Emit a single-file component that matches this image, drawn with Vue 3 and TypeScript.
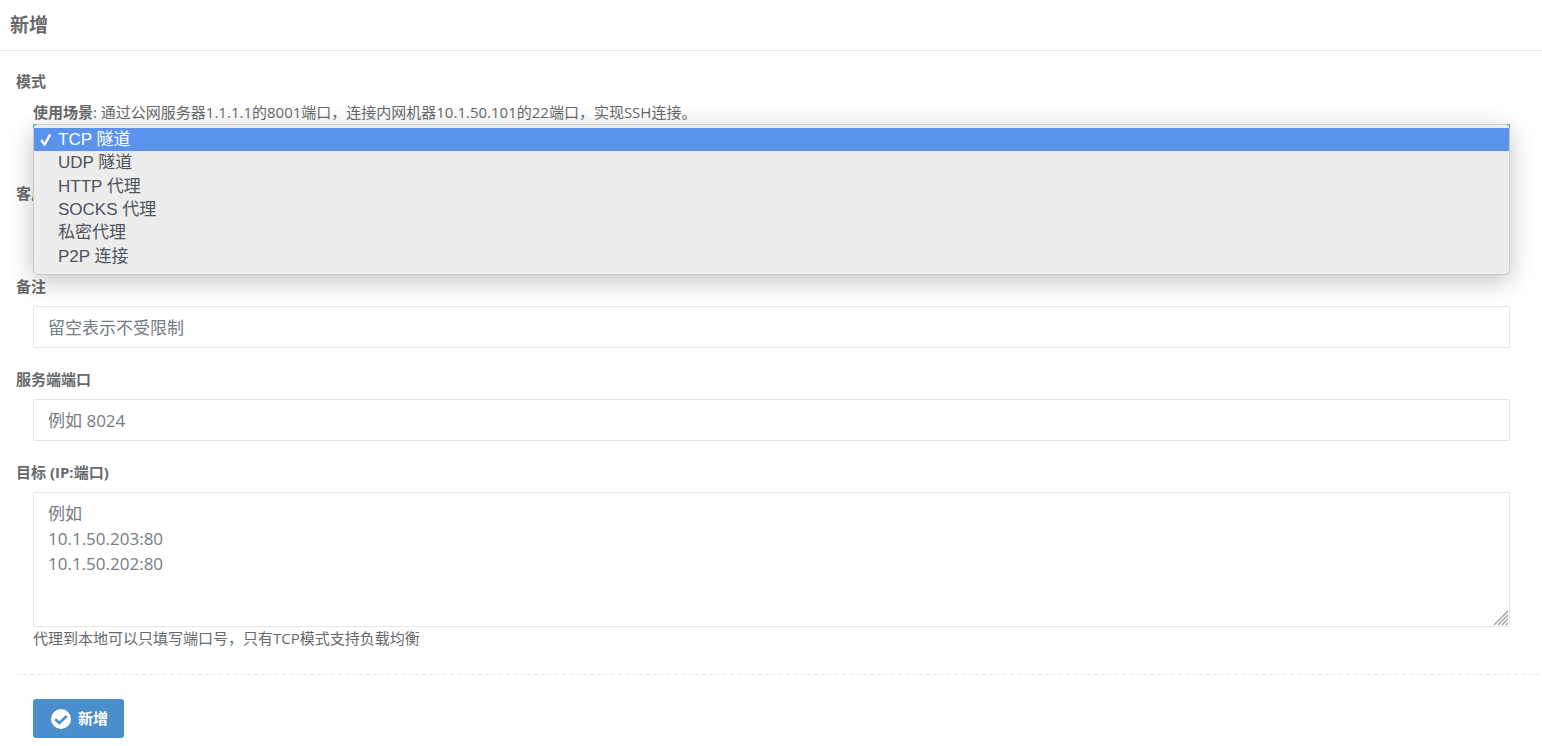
<script setup lang="ts">
import { ref } from 'vue'

interface Mode {
  value: string
  label: string
}

const modes: Mode[] = [
  { value: 'tcp', label: 'TCP 隧道' },
  { value: 'udpServer', label: 'UDP 隧道' },
  { value: 'httpProxy', label: 'HTTP 代理' },
  { value: 'socks5', label: 'SOCKS 代理' },
  { value: 'secret', label: '私密代理' },
  { value: 'p2p', label: 'P2P 连接' },
]

const mode = ref('tcp')
const menuOpen = ref(true)
const client = ref('')
const remark = ref('')
const port = ref('')
const target = ref('')
const targetHint = '例如\n10.1.50.203:80\n10.1.50.202:80'

function choose(value: string) {
  mode.value = value
  menuOpen.value = false
}
</script>

<template>
  <main class="panel">
    <header class="panel-head">
      <h1>新增</h1>
    </header>

    <form class="form" @submit.prevent>
      <div class="group">
        <label class="name" for="mode">模式</label>
        <div class="field mode-field">
          <p class="help"><b>使用场景</b>: 通过公网服务器1.1.1.1的8001端口，连接内网机器10.1.50.101的22端口，实现SSH连接。</p>
          <div class="picker">
            <select id="mode" v-model="mode" class="control active" @mousedown.prevent="menuOpen = !menuOpen">
              <option v-for="m in modes" :key="m.value" :value="m.value">{{ m.label }}</option>
            </select>
            <ul v-if="menuOpen" class="menu" role="listbox" aria-label="模式">
              <li
                v-for="m in modes"
                :key="m.value"
                role="option"
                :aria-selected="m.value === mode"
                :class="{ selected: m.value === mode }"
                @click="choose(m.value)"
              >
                <span class="mark">
                  <svg v-if="m.value === mode" viewBox="0 0 12 14" width="12" height="14" aria-hidden="true">
                    <path d="M1.8 7.8 4.6 11.6 9.8 2.2" fill="none" stroke="currentColor" stroke-width="2.4" stroke-linejoin="round" stroke-linecap="round" />
                  </svg>
                </span>
                <span>{{ m.label }}</span>
              </li>
            </ul>
          </div>
        </div>
      </div>

      <div class="group">
        <label class="name" for="client">客户端</label>
        <div class="field">
          <select id="client" v-model="client" class="control"></select>
        </div>
      </div>

      <div class="group">
        <label class="name" for="remark">备注</label>
        <div class="field">
          <input id="remark" v-model="remark" class="control" type="text" placeholder="留空表示不受限制" />
        </div>
      </div>

      <div class="group">
        <label class="name" for="port">服务端端口</label>
        <div class="field">
          <input id="port" v-model="port" class="control" type="text" placeholder="例如 8024" />
        </div>
      </div>

      <div class="group">
        <label class="name" for="target">目标 (IP:端口)</label>
        <div class="field">
          <div class="area">
            <textarea id="target" v-model="target" class="control" :placeholder="targetHint"></textarea>
            <svg class="grip" viewBox="0 0 16 16" width="16" height="16" aria-hidden="true">
              <path d="M1 15 15 1M5 15 15 5M9 15 15 9M13 15l2-2" fill="none" stroke="#999" stroke-width="1.2" />
            </svg>
          </div>
          <p class="help">代理到本地可以只填写端口号，只有TCP模式支持负载均衡</p>
        </div>
      </div>

      <hr class="divider" />

      <div class="actions">
        <button class="submit" type="submit">
          <svg viewBox="0 0 20 20" width="20" height="20" aria-hidden="true">
            <circle cx="10" cy="10" r="10" fill="#fff" />
            <path d="M4.2 10.2 8.4 14 15.8 7" fill="none" stroke="#4a8ecb" stroke-width="2.5" />
          </svg>
          <span>新增</span>
        </button>
      </div>
    </form>
  </main>
</template>

<style>
body {
  margin: 0;
  background: #fff;
}
</style>

<style scoped>
* {
  box-sizing: border-box;
}

.panel {
  color: #676a6c;
  font-family: "Open Sans", "Noto Sans CJK SC", sans-serif;
  font-size: 15px;
  line-height: 23px;
}

.panel-head {
  padding: 10px;
  border-bottom: 1px solid #e7eaec;
}

h1 {
  margin: 0;
  font-size: 19px;
  font-weight: 600;
  line-height: 30px;
}

.form {
  display: flex;
  flex-direction: column;
  padding: 19px 0 9px 16px;
}

.group {
  display: flex;
  flex-direction: column;
  gap: 8px;
  margin-bottom: 20px;
}

.name {
  align-self: flex-start;
  font-weight: 700;
}

.field,
.actions {
  padding: 0 32px 0 17px;
}

.help {
  margin: 0;
}

.control {
  display: block;
  width: 100%;
  height: 42px;
  margin: 0;
  padding: 8px 14px;
  border: 1px solid #e5e6e7;
  border-radius: 1px;
  outline: none;
  background: #fff;
  color: inherit;
  font-family: inherit;
  font-size: 17px;
  line-height: 25px;
}

.control::placeholder {
  color: #757c84;
  opacity: 1;
}

.mode-field .control {
  height: 38px;
}

.control.active {
  border-color: #1ab394;
}

textarea.control {
  height: 135px;
  resize: none;
}

.area,
.picker {
  position: relative;
}

.grip {
  position: absolute;
  right: 1px;
  bottom: 1px;
  pointer-events: none;
}

.menu {
  position: absolute;
  z-index: 2;
  top: 0;
  left: 0;
  right: 0;
  display: grid;
  grid-template-rows: repeat(6, 1fr);
  height: 151px;
  margin: 0;
  padding: 3px 0 6px;
  border: 1px solid #cbcbcb;
  border-radius: 5px;
  background: #ededed;
  box-shadow: 0 6px 24px rgba(0, 0, 0, 0.24);
  color: #4d535b;
  font-family: "Liberation Sans", "Noto Sans CJK SC", sans-serif;
  font-size: 17px;
  list-style: none;
}

.menu li {
  display: flex;
  align-items: center;
  padding-left: 6px;
  cursor: default;
}

.menu .selected {
  background: #5a92ee;
  color: #fff;
}

.mark {
  display: flex;
  width: 18px;
}

.divider {
  width: 100%;
  height: 1px;
  margin: 4px 0 24px;
  border: 0;
  background: repeating-linear-gradient(90deg, #e7eaec 0 4px, transparent 4px 7px);
}

.submit {
  display: flex;
  align-items: center;
  gap: 7px;
  height: 39px;
  padding: 0 16px 0 18px;
  border: 0;
  border-radius: 3px;
  background: #4a8ecb;
  color: #fff;
  font-family: inherit;
  font-size: 15px;
  font-weight: 600;
  line-height: 23px;
}
</style>
